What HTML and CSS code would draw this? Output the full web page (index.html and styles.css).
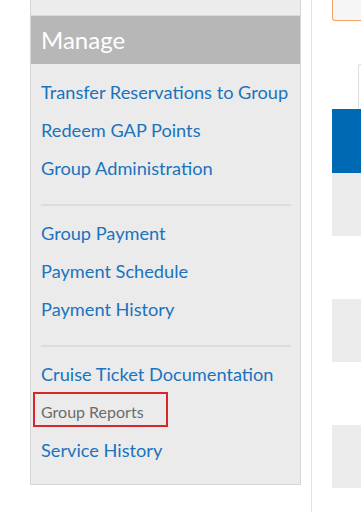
FILE: index.html
```html
<!DOCTYPE html>
<html lang="en">
<head>
    <meta charset="UTF-8">
    <meta name="viewport" content="width=device-width, initial-scale=1.0">
    <title>Manage Group</title>
    <link rel="stylesheet" href="styles.css">
</head>
<body>
    <div class="page">
        <aside class="sidebar">
            <div class="sidebar-top"></div>
            <h2 class="sidebar-title">Manage</h2>
            <ul class="menu">
                <li><a href="#">Transfer Reservations to Group</a></li>
                <li><a href="#">Redeem GAP Points</a></li>
                <li><a href="#">Group Administration</a></li>
                <li class="sep"></li>
                <li><a href="#">Group Payment</a></li>
                <li><a href="#">Payment Schedule</a></li>
                <li><a href="#">Payment History</a></li>
                <li class="sep"></li>
                <li><a href="#">Cruise Ticket Documentation</a></li>
                <li class="current"><span>Group Reports</span></li>
                <li><a href="#">Service History</a></li>
            </ul>
        </aside>
        <div class="divider"></div>
        <main class="content">
            <div class="notice"></div>
            <div class="tab"></div>
            <div class="row row-head"></div>
            <div class="row row-gray"></div>
            <div class="row"></div>
            <div class="row row-gray"></div>
            <div class="row"></div>
            <div class="row row-gray"></div>
        </main>
    </div>
</body>
</html>
```

FILE: styles.css
```css
body {
    margin: 0;
    background: #fff;
    font-family: Lato, "Open Sans", Arial, sans-serif;
}
.page {
    display: flex;
    height: 512px;
    overflow: hidden;
}
.sidebar {
    margin-left: 30px;
    width: 269px;
    align-self: flex-start;
    background: #ebebeb;
    border: 1px solid #d6d6d6;
    border-top: none;
}
.sidebar-top {
    height: 15px;
    background: #ececec;
    border-bottom: 1px solid #d9d9d9;
}
.sidebar-title {
    margin: 0;
    height: 48px;
    line-height: 47px;
    padding-left: 10px;
    background: #b7b7b7;
    color: #fff;
    font-size: 24px;
    font-weight: normal;
}
.menu {
    list-style: none;
    margin: 0;
    padding: 9px 9px 15px 10px;
}
.menu li {
    height: 38px;
    line-height: 38px;
    font-size: 18.2px;
}
.menu a {
    color: #1a73bd;
    text-decoration: none;
}
.menu .sep {
    height: 0;
    margin: 17px 0 8px;
    border-top: 2px solid #dcdcdc;
}
.menu .current {
    position: relative;
    font-size: 16px;
    color: #6b6b6b;
}
.menu .current::after {
    content: "";
    position: absolute;
    left: -8px;
    top: -1px;
    width: 131px;
    height: 31px;
    border: 2px solid #d9262a;
}
.divider {
    margin-left: 10px;
    width: 1px;
    background: #e2e2e2;
}
.content {
    margin-left: 20px;
    flex: 1;
    display: flex;
    flex-direction: column;
}
.notice {
    height: 20px;
    background: #f6f6f7;
    border-left: 1px solid #f4a46a;
    border-bottom: 1px solid #f4a46a;
    border-bottom-left-radius: 3px;
}
.tab {
    margin: 43px 0 0 26px;
    height: 44px;
    border-left: 1px solid #dedede;
    border-top: 1px solid #dedede;
    border-top-left-radius: 3px;
}
.row {
    height: 63px;
}
.row-head {
    height: 64px;
    background: #0069b3;
}
.row-gray {
    background: #ebebeb;
}
```
